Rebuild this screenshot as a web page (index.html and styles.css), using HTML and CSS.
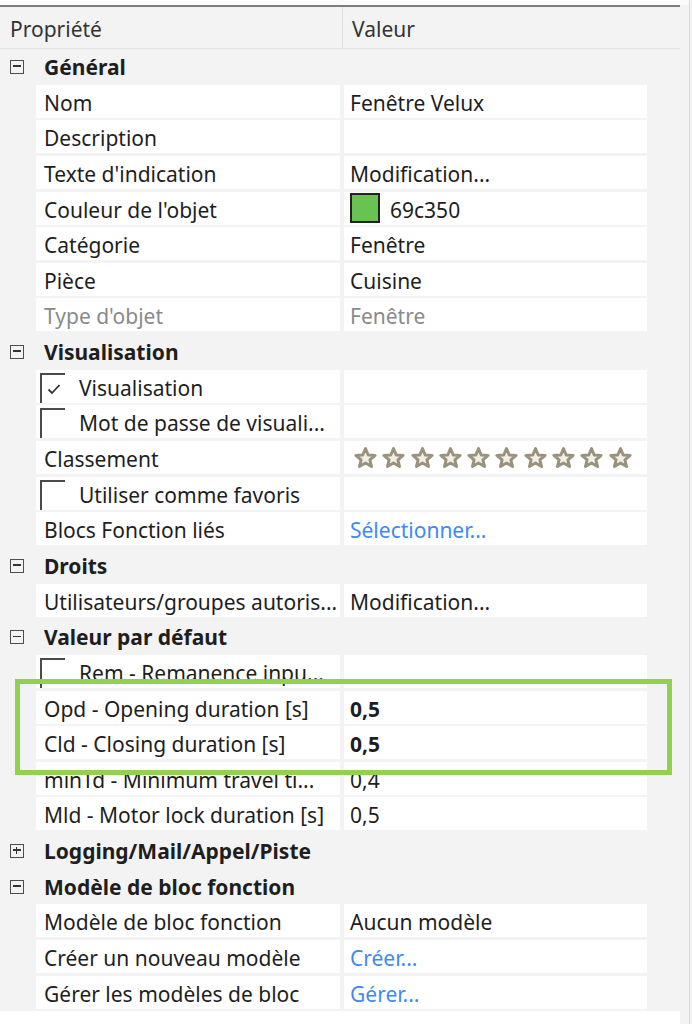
FILE: index.html
```html
<!DOCTYPE html>
<html lang="fr">
<head>
    <meta charset="UTF-8">
    <title>Propriétés</title>
    <link rel="stylesheet" href="styles.css">
</head>
<body>
    <div class="grid-panel">
        <div class="grid-header">
            <div class="head-prop">Propriété</div>
            <div class="head-value">Valeur</div>
        </div>

        <div class="group"><span class="toggle"></span>Général</div>
        <div class="row"><div class="prop">Nom</div><div class="value">Fenêtre Velux</div></div>
        <div class="row"><div class="prop">Description</div><div class="value"></div></div>
        <div class="row"><div class="prop">Texte d'indication</div><div class="value">Modification...</div></div>
        <div class="row"><div class="prop">Couleur de l'objet</div><div class="value"><span class="swatch"></span>69c350</div></div>
        <div class="row"><div class="prop">Catégorie</div><div class="value">Fenêtre</div></div>
        <div class="row"><div class="prop">Pièce</div><div class="value">Cuisine</div></div>
        <div class="row readonly"><div class="prop">Type d'objet</div><div class="value">Fenêtre</div></div>

        <div class="group"><span class="toggle"></span>Visualisation</div>
        <div class="row"><div class="prop"><span class="check"><svg width="14" height="12" viewBox="0 0 14 12"><path d="M1.5 6.5 L5 10 L12.5 2" fill="none" stroke="#333" stroke-width="1.8"/></svg></span>Visualisation</div><div class="value"></div></div>
        <div class="row"><div class="prop"><span class="check"></span>Mot de passe de visuali...</div><div class="value"></div></div>
        <div class="row"><div class="prop">Classement</div><div class="value stars" id="stars"></div></div>
        <div class="row"><div class="prop"><span class="check"></span>Utiliser comme favoris</div><div class="value"></div></div>
        <div class="row"><div class="prop">Blocs Fonction liés</div><div class="value link">Sélectionner...</div></div>

        <div class="group"><span class="toggle"></span>Droits</div>
        <div class="row"><div class="prop">Utilisateurs/groupes autoris...</div><div class="value">Modification...</div></div>

        <div class="group"><span class="toggle"></span>Valeur par défaut</div>
        <div class="row"><div class="prop"><span class="check"></span>Rem - Remanence inpu...</div><div class="value"></div></div>
        <div class="row"><div class="prop">Opd - Opening duration [s]</div><div class="value strong">0,5</div></div>
        <div class="row"><div class="prop">Cld - Closing duration [s]</div><div class="value strong">0,5</div></div>
        <div class="row"><div class="prop">minTd - Minimum travel ti...</div><div class="value">0,4</div></div>
        <div class="row"><div class="prop">Mld - Motor lock duration [s]</div><div class="value">0,5</div></div>

        <div class="group"><span class="toggle collapsed"></span>Logging/Mail/Appel/Piste</div>
        <div class="group"><span class="toggle"></span>Modèle de bloc fonction</div>
        <div class="row"><div class="prop">Modèle de bloc fonction</div><div class="value">Aucun modèle</div></div>
        <div class="row"><div class="prop">Créer un nouveau modèle</div><div class="value link">Créer...</div></div>
        <div class="row"><div class="prop">Gérer les modèles de bloc</div><div class="value link">Gérer...</div></div>

        <div class="description"></div>

        <div class="highlight"></div>
    </div>

    <script>
        // ten empty rating stars
        const stars = document.getElementById('stars');
        for (let i = 0; i < 10; i++) {
            stars.insertAdjacentHTML('beforeend',
                '<svg class="star" width="23" height="21" viewBox="0 0 22 20"><polygon points="11,1.5 13.6,7.6 20.2,8 15.2,12.3 16.8,18.6 11,15.2 5.2,18.6 6.8,12.3 1.8,8 8.4,7.6" fill="#f2efe6" stroke="#9a927d" stroke-width="2.8" stroke-linejoin="round"/></svg>');
        }
    </script>
</body>
</html>
```

FILE: styles.css
```css
body {
    margin: 0;
    background-color: #f3f3f3;
    font-family: 'Noto Sans', 'Open Sans', sans-serif;
    font-size: 21px;
    color: #1e1e1e;
    overflow: hidden;
}
.grid-panel {
    position: relative;
    width: 689px;
    height: 1024px;
    border-right: 1px solid #dadada;
    padding-top: 5px;
    background: linear-gradient(#fbfbfb, #fbfbfb) top / 100% 5px no-repeat, #f3f3f3;
}
.grid-header {
    display: flex;
    width: 680px;
    height: 41px;
    border-top: 2px solid #7d7d7d;
    border-bottom: 1px solid #e2e2e2;
    color: #333;
}
.head-prop {
    width: 332px;
    padding: 3px 0 0 10px;
    line-height: 38px;
    border-right: 1px solid #e0e0e0;
}
.head-value {
    padding: 3px 0 0 9px;
    line-height: 38px;
}
.group {
    display: flex;
    align-items: center;
    height: 35.65px;
    font-weight: bold;
    padding-left: 10px;
}
.toggle {
    position: relative;
    box-sizing: border-box;
    width: 14px;
    height: 14px;
    border: 1.5px solid #4d4d4d;
    margin-right: 20px;
}
.toggle::before, .toggle.collapsed::after {
    content: '';
    position: absolute;
    left: 2px;
    right: 2px;
    top: 4.5px;
    height: 1.5px;
    background-color: #333;
}
.toggle.collapsed::after {
    left: 4.5px;
    right: auto;
    top: 2px;
    width: 1.5px;
    height: 7px;
}
.row {
    display: grid;
    grid-template-columns: 304px 303px;
    column-gap: 4px;
    margin-left: 36px;
    height: 33px;
    margin-bottom: 2.65px;
}
.prop, .value {
    box-sizing: border-box;
    background-color: #fff;
    display: flex;
    align-items: center;
    padding-top: 3px;
    white-space: nowrap;
    overflow: hidden;
}
.prop {
    padding-left: 8px;
}
.value {
    padding-left: 6px;
}
.readonly .prop, .readonly .value {
    color: #8a8a8a;
}
.link {
    color: #3d8af5;
}
.strong {
    font-weight: bold;
}
.check {
    align-self: flex-start;
    flex-shrink: 0;
    box-sizing: border-box;
    width: 25px;
    height: 30px;
    margin: 0 14px 0 -4px;
    border-top: 2px solid #4a4a4a;
    border-left: 2px solid #4a4a4a;
    padding: 8px 0 0 5px;
}
.check svg {
    display: block;
}
.swatch {
    flex-shrink: 0;
    box-sizing: border-box;
    width: 30px;
    height: 30px;
    margin: -3px 10px 0 0;
    background-color: #69c350;
    border: 2px solid #222;
}
.stars {
    gap: 5.3px;
    padding-left: 10px;
    padding-top: 0;
}
.star {
    display: block;
    flex-shrink: 0;
}
.description {
    margin-top: 1px;
    width: 680px;
    height: 40px;
    background-color: #fff;
}
.highlight {
    position: absolute;
    left: 15px;
    top: 679px;
    width: 647px;
    height: 86px;
    border: 5px solid #92d050;
}
```
